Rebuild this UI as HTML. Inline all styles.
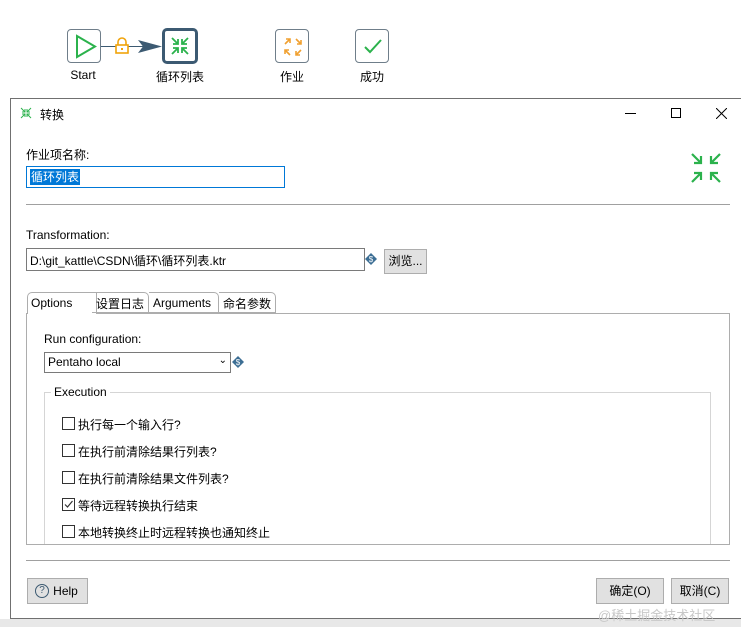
<!DOCTYPE html>
<html><head><meta charset="utf-8"><style>
*{margin:0;padding:0;box-sizing:border-box}
body{width:741px;height:627px;overflow:hidden;background:#fff;font-family:"Liberation Sans","Noto Sans CJK SC",sans-serif;font-size:12px;color:#000;position:relative}
.a{position:absolute}
.node{position:absolute;width:34px;height:34px;border:1px solid #6f7e8a;border-radius:4px;background:#fff}
.lbl{position:absolute;font-size:12px;text-align:center;width:80px}
.cb{position:absolute;width:13px;height:13px;border:1px solid #333;background:#fff}
.btn{position:absolute;background:#e1e1e1;border:1px solid #adadad;font-size:12px;text-align:center}
</style></head><body>
<div class="node" style="left:67px;top:29px"><svg width="34" height="34"><polygon points="9,6 27,16.5 9,27" fill="none" stroke="#2bb24c" stroke-width="2"/></svg></div>
<div class="lbl" style="left:43px;top:68px">Start</div>
<div class="a" style="left:101px;top:46px;width:50px;height:1px;background:#3c5a72"></div>
<svg class="a" style="left:114px;top:37px" width="16" height="17"><path d="M4,8 V5 a4,4 0 0 1 8,0 V8" fill="none" stroke="#f0a30a" stroke-width="1.6"/><rect x="2" y="8" width="12" height="8" fill="#fff" stroke="#f0a30a" stroke-width="1.6"/><rect x="7" y="11" width="2" height="2" fill="#f0a30a"/></svg>
<svg class="a" style="left:138px;top:40px" width="24" height="13"><polygon points="0,0 24,6.5 0,13 5,6.5" fill="#3c5a72"/></svg>
<div class="node" style="left:162px;top:28px;width:36px;height:36px;border:3px solid #3c5a72;border-radius:5px"><svg width="30" height="30" stroke="#2bb24c" stroke-width="1.8" fill="none"><path d="M7,7 L13,13 M13,8 V13 H8 M23,7 L17,13 M17,8 V13 H22 M7,23 L13,17 M8,17 H13 V22 M23,23 L17,17 M22,17 H17 V22"/></svg></div>
<div class="lbl" style="left:140px;top:68px">循环列表</div>
<div class="node" style="left:275px;top:29px"><svg width="34" height="34" stroke="#f0a030" stroke-width="1.6" fill="none"><path d="M9,14 L14,9 M10,9 H14 V13 M20,9 L25,14 M21,14 H25 V10 M9,20 L14,25 M9,24 V20 H13 M25,20 L20,25 M20,21 V25 H24"/></svg></div>
<div class="lbl" style="left:252px;top:68px">作业</div>
<div class="node" style="left:355px;top:29px"><svg width="34" height="34"><path d="M9,17 L14,22 L25,10" fill="none" stroke="#2bb24c" stroke-width="2"/></svg></div>
<div class="lbl" style="left:332px;top:68px">成功</div>

<div class="a" style="left:10px;top:98px;width:740px;height:521px;border:1px solid #707070;background:#fff"></div>
<div class="a" style="left:0;top:619px;width:741px;height:8px;background:#e8e8e8"></div>
<svg class="a" style="left:20px;top:107px" width="12" height="12" stroke="#2bb24c" stroke-width="1" fill="none"><path d="M1,1 L5,5 M5,2 V5 H2 M11,1 L7,5 M7,2 V5 H10 M1,11 L5,7 M2,7 H5 V10 M11,11 L7,7 M10,7 H7 V10"/></svg>
<div class="a" style="left:40px;top:106px">转换</div>
<div class="a" style="left:625px;top:113px;width:11px;height:1px;background:#000"></div>
<div class="a" style="left:671px;top:108px;width:10px;height:10px;border:1px solid #000"></div>
<svg class="a" style="left:716px;top:108px" width="11" height="11"><path d="M0,0 L11,11 M11,0 L0,11" stroke="#000"/></svg>

<div class="a" style="left:26px;top:146px">作业项名称:</div>
<div class="a" style="left:26px;top:166px;width:259px;height:22px;border:1px solid #0078d7"><span style="position:absolute;left:3px;top:2px;background:#0078d7;color:#fff;padding:0 1px;line-height:16px">循环列表</span></div>
<svg class="a" style="left:690px;top:152px" width="32" height="32" stroke="#2bb24c" stroke-width="2.2" fill="none"><path d="M2,2 L11,11 M11,4 V11 H4 M30,2 L21,11 M21,4 V11 H28 M2,30 L11,21 M4,21 H11 V28 M30,30 L21,21 M28,21 H21 V28"/></svg>
<div class="a" style="left:26px;top:204px;width:704px;height:1px;background:#a0a0a0"></div>

<div class="a" style="left:26px;top:228px">Transformation:</div>
<div class="a" style="left:26px;top:248px;width:339px;height:23px;border:1px solid #7a7a7a;padding:3px 3px">D:\git_kattle\CSDN\循环\循环列表.ktr</div>
<svg class="a" style="left:365px;top:253px" width="12" height="12"><polygon points="6,0 12,6 6,12 0,6" fill="#3c6e94"/><text x="6" y="9" font-size="8" fill="#fff" text-anchor="middle" font-family="Liberation Sans">$</text></svg>
<div class="btn" style="left:384px;top:249px;width:43px;height:25px;line-height:23px">浏览...</div>

<div class="a" style="left:26px;top:313px;width:704px;height:232px;border:1px solid #adadad;border-bottom:none;background:#fff"></div>
<div class="a" style="left:26px;top:291px;width:704px;height:23px;border-bottom:1px solid #adadad"></div>
<div class="a" style="left:27px;top:292px;width:70px;height:22px;background:#fff;border:1px solid #adadad;border-bottom:none;border-radius:5px 0 0 0;padding:3px 3px">Options</div>
<div class="a" style="left:92px;top:292px;width:57px;height:21px;border:1px solid #adadad;border-left:none;border-radius:0 5px 0 0;padding:2px 4px">设置日志</div>
<div class="a" style="left:149px;top:292px;width:70px;height:21px;border:1px solid #adadad;border-left:none;border-radius:0 5px 0 0;padding:3px 4px">Arguments</div>
<div class="a" style="left:219px;top:292px;width:57px;height:21px;border:1px solid #adadad;border-left:none;border-radius:0 5px 0 0;padding:2px 4px">命名参数</div>

<div class="a" style="left:44px;top:332px">Run configuration:</div>
<div class="a" style="left:44px;top:352px;width:187px;height:21px;border:1px solid #7a7a7a;padding:2px 3px">Pentaho local<span style="position:absolute;right:3px;top:2px;font-size:10px">&#8964;</span></div>
<svg class="a" style="left:232px;top:356px" width="12" height="12"><polygon points="6,0 12,6 6,12 0,6" fill="#3c6e94"/><text x="6" y="9" font-size="8" fill="#fff" text-anchor="middle" font-family="Liberation Sans">$</text></svg>

<div class="a" style="left:44px;top:392px;width:667px;height:153px;border:1px solid #d5d5d5;border-bottom:none"></div>
<div class="a" style="left:51px;top:385px;background:#fff;padding:0 3px">Execution</div>
<div class="cb" style="left:62px;top:417px"></div><div class="a" style="left:78px;top:416px">执行每一个输入行?</div>
<div class="cb" style="left:62px;top:444px"></div><div class="a" style="left:78px;top:443px">在执行前清除结果行列表?</div>
<div class="cb" style="left:62px;top:471px"></div><div class="a" style="left:78px;top:470px">在执行前清除结果文件列表?</div>
<div class="cb" style="left:62px;top:498px"><svg width="11" height="11" style="position:absolute;left:0;top:0"><path d="M2,5.5 L4.5,8 L9.5,2" fill="none" stroke="#333" stroke-width="1.2"/></svg></div><div class="a" style="left:78px;top:497px">等待远程转换执行结束</div>
<div class="cb" style="left:62px;top:525px"></div><div class="a" style="left:78px;top:524px">本地转换终止时远程转换也通知终止</div>
<div class="a" style="left:26px;top:544px;width:704px;height:1px;background:#adadad"></div>

<div class="a" style="left:26px;top:560px;width:704px;height:1px;background:#a0a0a0"></div>
<div class="btn" style="left:27px;top:578px;width:61px;height:26px;line-height:24px;padding-left:16px">Help<span style="position:absolute;left:7px;top:5px;width:14px;height:14px;border:1.5px solid #3c5a72;border-radius:50%;font-size:10px;line-height:11px;color:#3c5a72">?</span></div>
<div class="btn" style="left:596px;top:578px;width:68px;height:26px;line-height:24px">确定(O)</div>
<div class="btn" style="left:671px;top:578px;width:58px;height:26px;line-height:24px">取消(C)</div>
<div class="a" style="left:598px;top:605px;color:#c8c8c8;font-size:13px">@稀土掘金技术社区</div>
</body></html>
